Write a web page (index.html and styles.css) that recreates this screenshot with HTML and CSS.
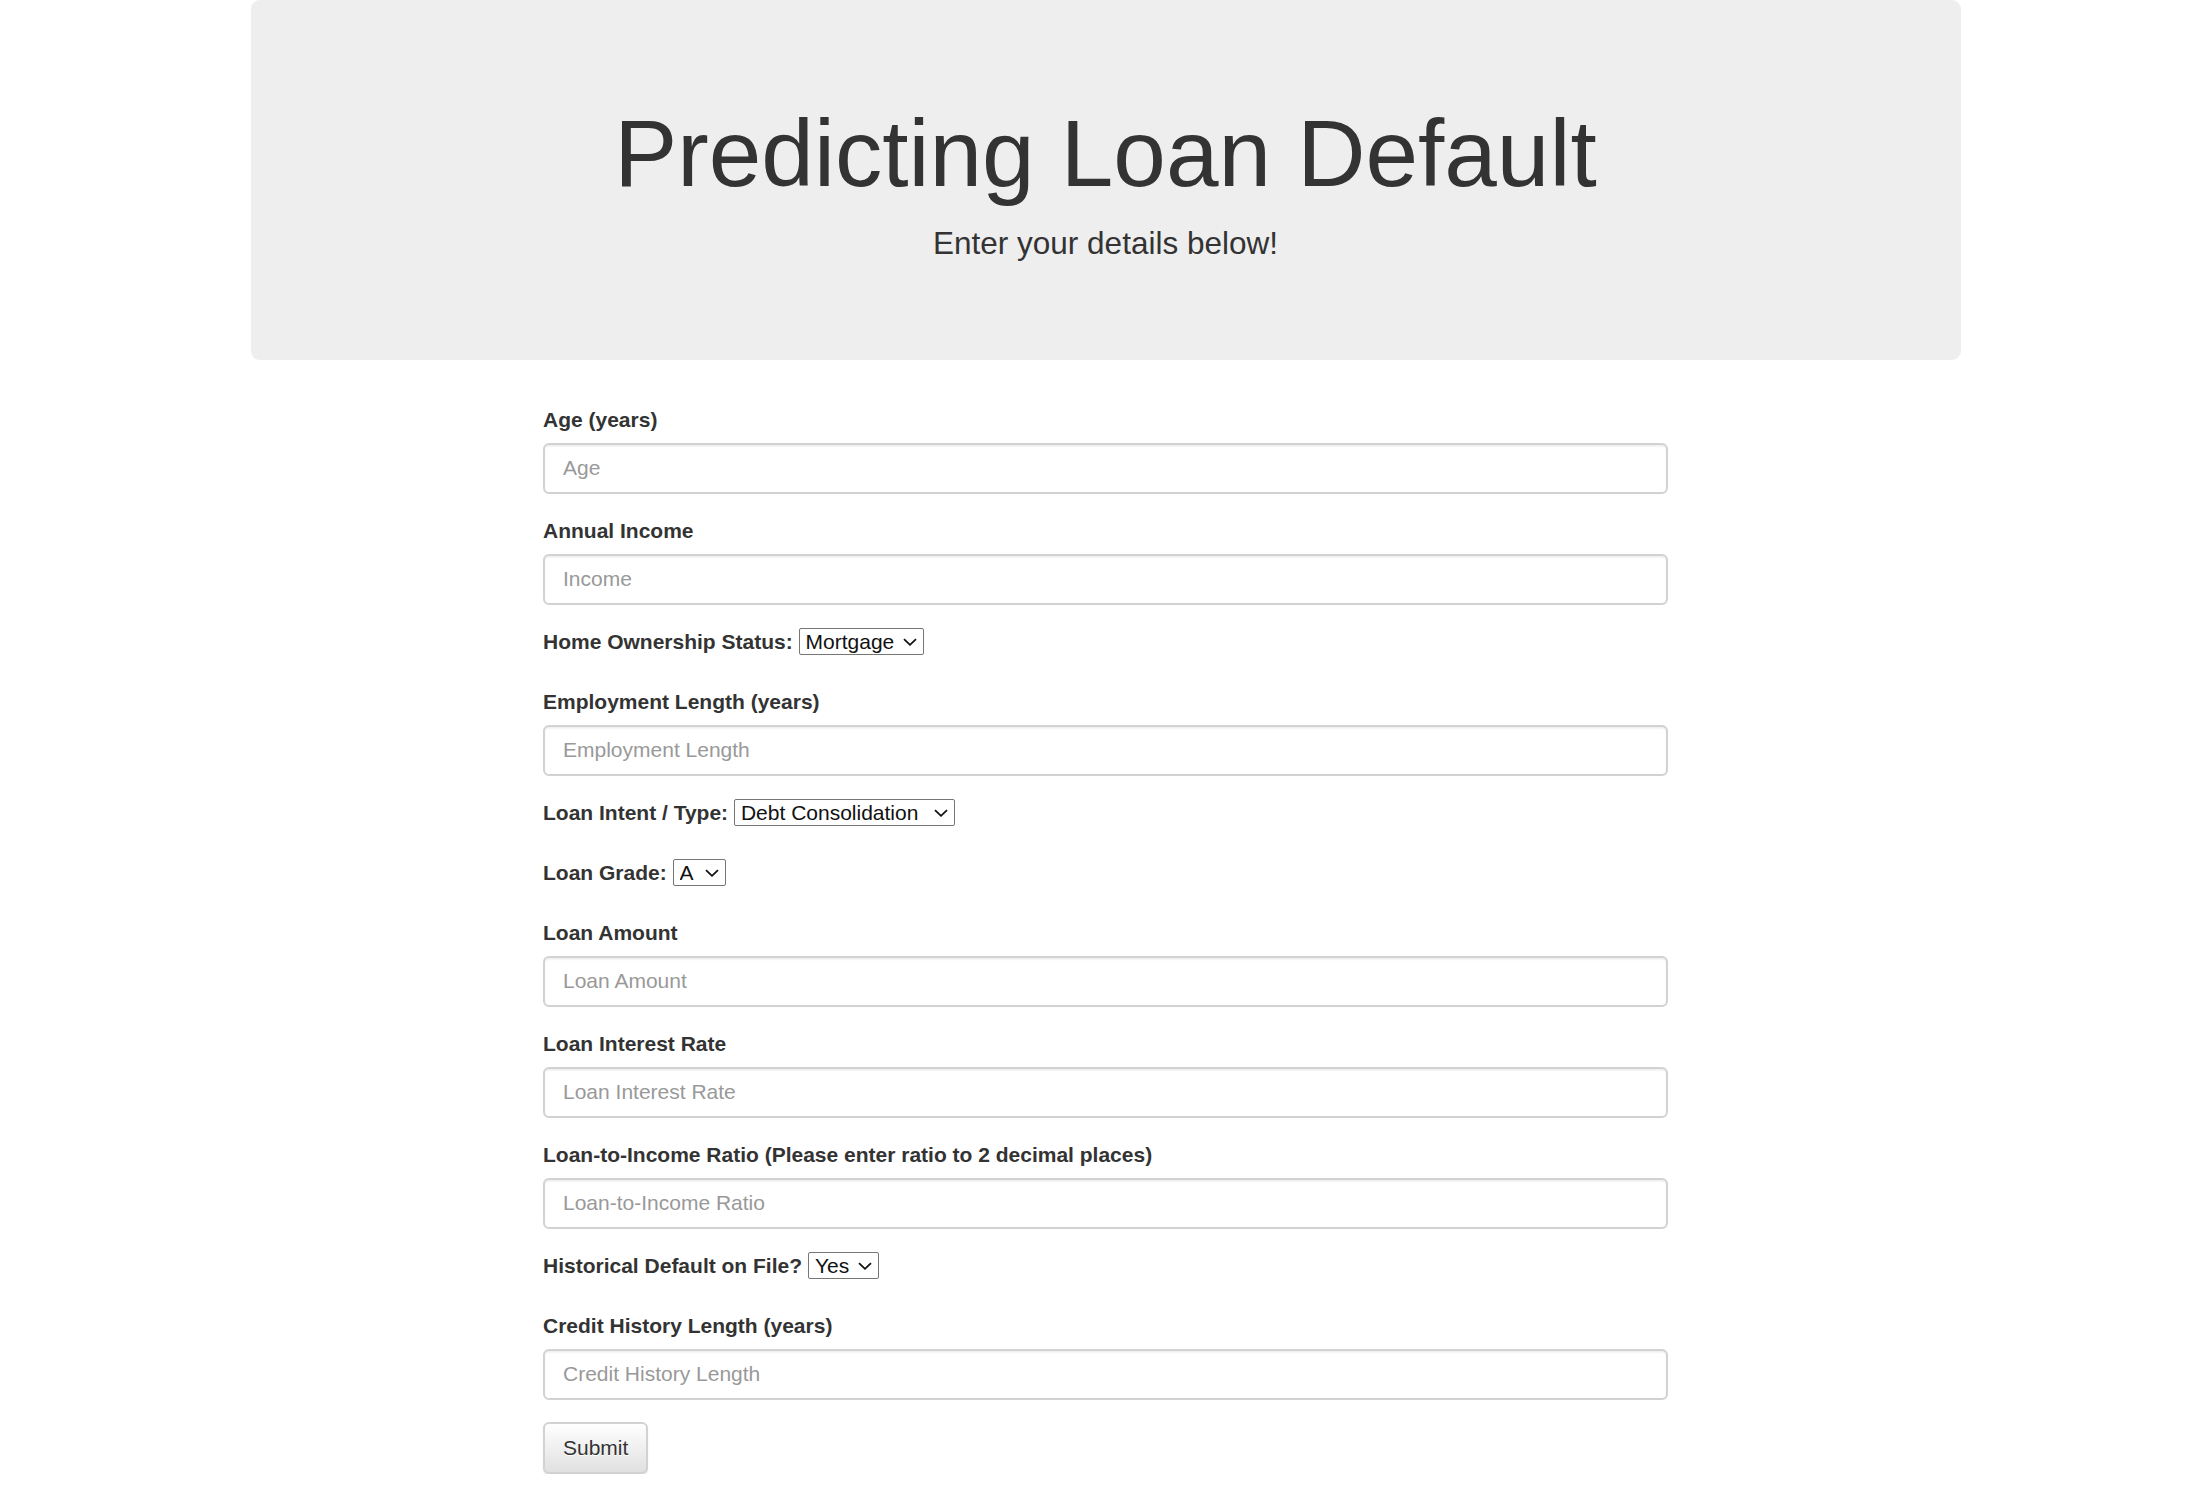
FILE: index.html
```html
<!DOCTYPE html>
<html lang="en">
<head>
<meta charset="utf-8">
<title>Predicting Loan Default</title>
<link rel="stylesheet" href="styles.css">
</head>
<body>
<div class="container">
  <div class="jumbotron">
    <h1>Predicting Loan Default</h1>
    <p>Enter your details below!</p>
  </div>
  <form class="loan-form">
    <div class="form-group">
      <label for="age">Age (years)</label>
      <input class="form-control" id="age" type="text" placeholder="Age">
    </div>
    <div class="form-group">
      <label for="income">Annual Income</label>
      <input class="form-control" id="income" type="text" placeholder="Income">
    </div>
    <div class="form-group">
      <label for="home">Home Ownership Status:</label>
      <span class="select-wrap"><select id="home" class="select">
        <option>Mortgage</option><option>Rent</option><option>Own</option><option>Other</option>
      </select><svg class="chev" width="14" height="8" viewBox="0 0 14 8"><path d="M1 1.2l6 5.6 6-5.6" fill="none" stroke="#111" stroke-width="1.8"/></svg></span>
    </div>
    <div class="form-group">
      <label for="emp">Employment Length (years)</label>
      <input class="form-control" id="emp" type="text" placeholder="Employment Length">
    </div>
    <div class="form-group">
      <label for="intent">Loan Intent / Type:</label>
      <span class="select-wrap"><select id="intent" class="select">
        <option>Debt Consolidation</option><option>Education</option><option>Medical</option><option>Personal</option><option>Venture</option><option>Home Improvement</option>
      </select><svg class="chev" width="14" height="8" viewBox="0 0 14 8"><path d="M1 1.2l6 5.6 6-5.6" fill="none" stroke="#111" stroke-width="1.8"/></svg></span>
    </div>
    <div class="form-group">
      <label for="grade">Loan Grade:</label>
      <span class="select-wrap"><select id="grade" class="select">
        <option>A</option><option>B</option><option>C</option><option>D</option><option>E</option><option>F</option><option>G</option>
      </select><svg class="chev" width="14" height="8" viewBox="0 0 14 8"><path d="M1 1.2l6 5.6 6-5.6" fill="none" stroke="#111" stroke-width="1.8"/></svg></span>
    </div>
    <div class="form-group">
      <label for="amount">Loan Amount</label>
      <input class="form-control" id="amount" type="text" placeholder="Loan Amount">
    </div>
    <div class="form-group">
      <label for="rate">Loan Interest Rate</label>
      <input class="form-control" id="rate" type="text" placeholder="Loan Interest Rate">
    </div>
    <div class="form-group">
      <label for="lti">Loan-to-Income Ratio (Please enter ratio to 2 decimal places)</label>
      <input class="form-control" id="lti" type="text" placeholder="Loan-to-Income Ratio">
    </div>
    <div class="form-group">
      <label for="hist">Historical Default on File?</label>
      <span class="select-wrap"><select id="hist" class="select">
        <option>Yes</option><option>No</option>
      </select><svg class="chev" width="14" height="8" viewBox="0 0 14 8"><path d="M1 1.2l6 5.6 6-5.6" fill="none" stroke="#111" stroke-width="1.8"/></svg></span>
    </div>
    <div class="form-group">
      <label for="credit">Credit History Length (years)</label>
      <input class="form-control" id="credit" type="text" placeholder="Credit History Length">
    </div>
    <button type="submit" class="btn">Submit</button>
  </form>
</div>
</body>
</html>
```

FILE: styles.css
```css
* { box-sizing: border-box; }

html, body {
  margin: 0;
  padding: 0;
  background: #fff;
}

body {
  font-family: "Liberation Sans", Arial, Helvetica, sans-serif;
  font-size: 21px;
  line-height: 1.42857;
  color: #333;
}

.container {
  width: 1755px;
  margin: 0 auto;
  padding: 0 22.5px;
}

.jumbotron {
  background: #eee;
  border-radius: 9px;
  padding: 72px 90px;
  margin-bottom: 45px;
  text-align: center;
}

.jumbotron h1 {
  font-size: 94.5px;
  font-weight: 400;
  line-height: 1.1;
  margin: 30px 0 15px;
  color: #333;
}

.jumbotron p {
  font-size: 31.5px;
  font-weight: 400;
  margin: 0 0 22.5px;
}

.loan-form {
  width: 1125px;
  margin: 0 auto;
}

.form-group {
  margin-bottom: 22.5px;
}

label {
  display: inline-block;
  max-width: 100%;
  margin-bottom: 7.5px;
  font-weight: 700;
}

.form-control {
  display: block;
  width: 100%;
  height: 51px;
  padding: 9px 18px;
  font-family: inherit;
  font-size: 21px;
  line-height: 1.42857;
  color: #555;
  background: #fff;
  border: 2px solid #d2d2d2;
  border-radius: 6px;
  box-shadow: inset 0 1.5px 1.5px rgba(0, 0, 0, 0.075);
  margin: 0;
}

.form-control::placeholder {
  color: #999;
  opacity: 1;
}

.select-wrap {
  position: relative;
  display: inline-block;
}

.select {
  -webkit-appearance: none;
  appearance: none;
  font-family: inherit;
  font-size: 21px;
  line-height: normal;
  color: #111;
  background: #fff;
  border: 1px solid #767676;
  border-radius: 2px;
  padding: 1px 28px 1px 6px;
  margin: 0;
}

.chev {
  position: absolute;
  right: 7px;
  top: 50%;
  margin-top: -4px;
  pointer-events: none;
}

.btn {
  display: inline-block;
  font-family: inherit;
  font-size: 21px;
  line-height: 1.42857;
  padding: 9px 18px;
  color: #333;
  border: 2px solid #d2d2d2;
  border-radius: 6px;
  background-image: linear-gradient(to bottom, #fff 0, #e0e0e0 100%);
  text-shadow: 0 1px 0 #fff;
  box-shadow: inset 0 1px 0 rgba(255, 255, 255, 0.15), 0 1.5px 1.5px rgba(0, 0, 0, 0.075);
  cursor: pointer;
  margin: 0;
}
```
